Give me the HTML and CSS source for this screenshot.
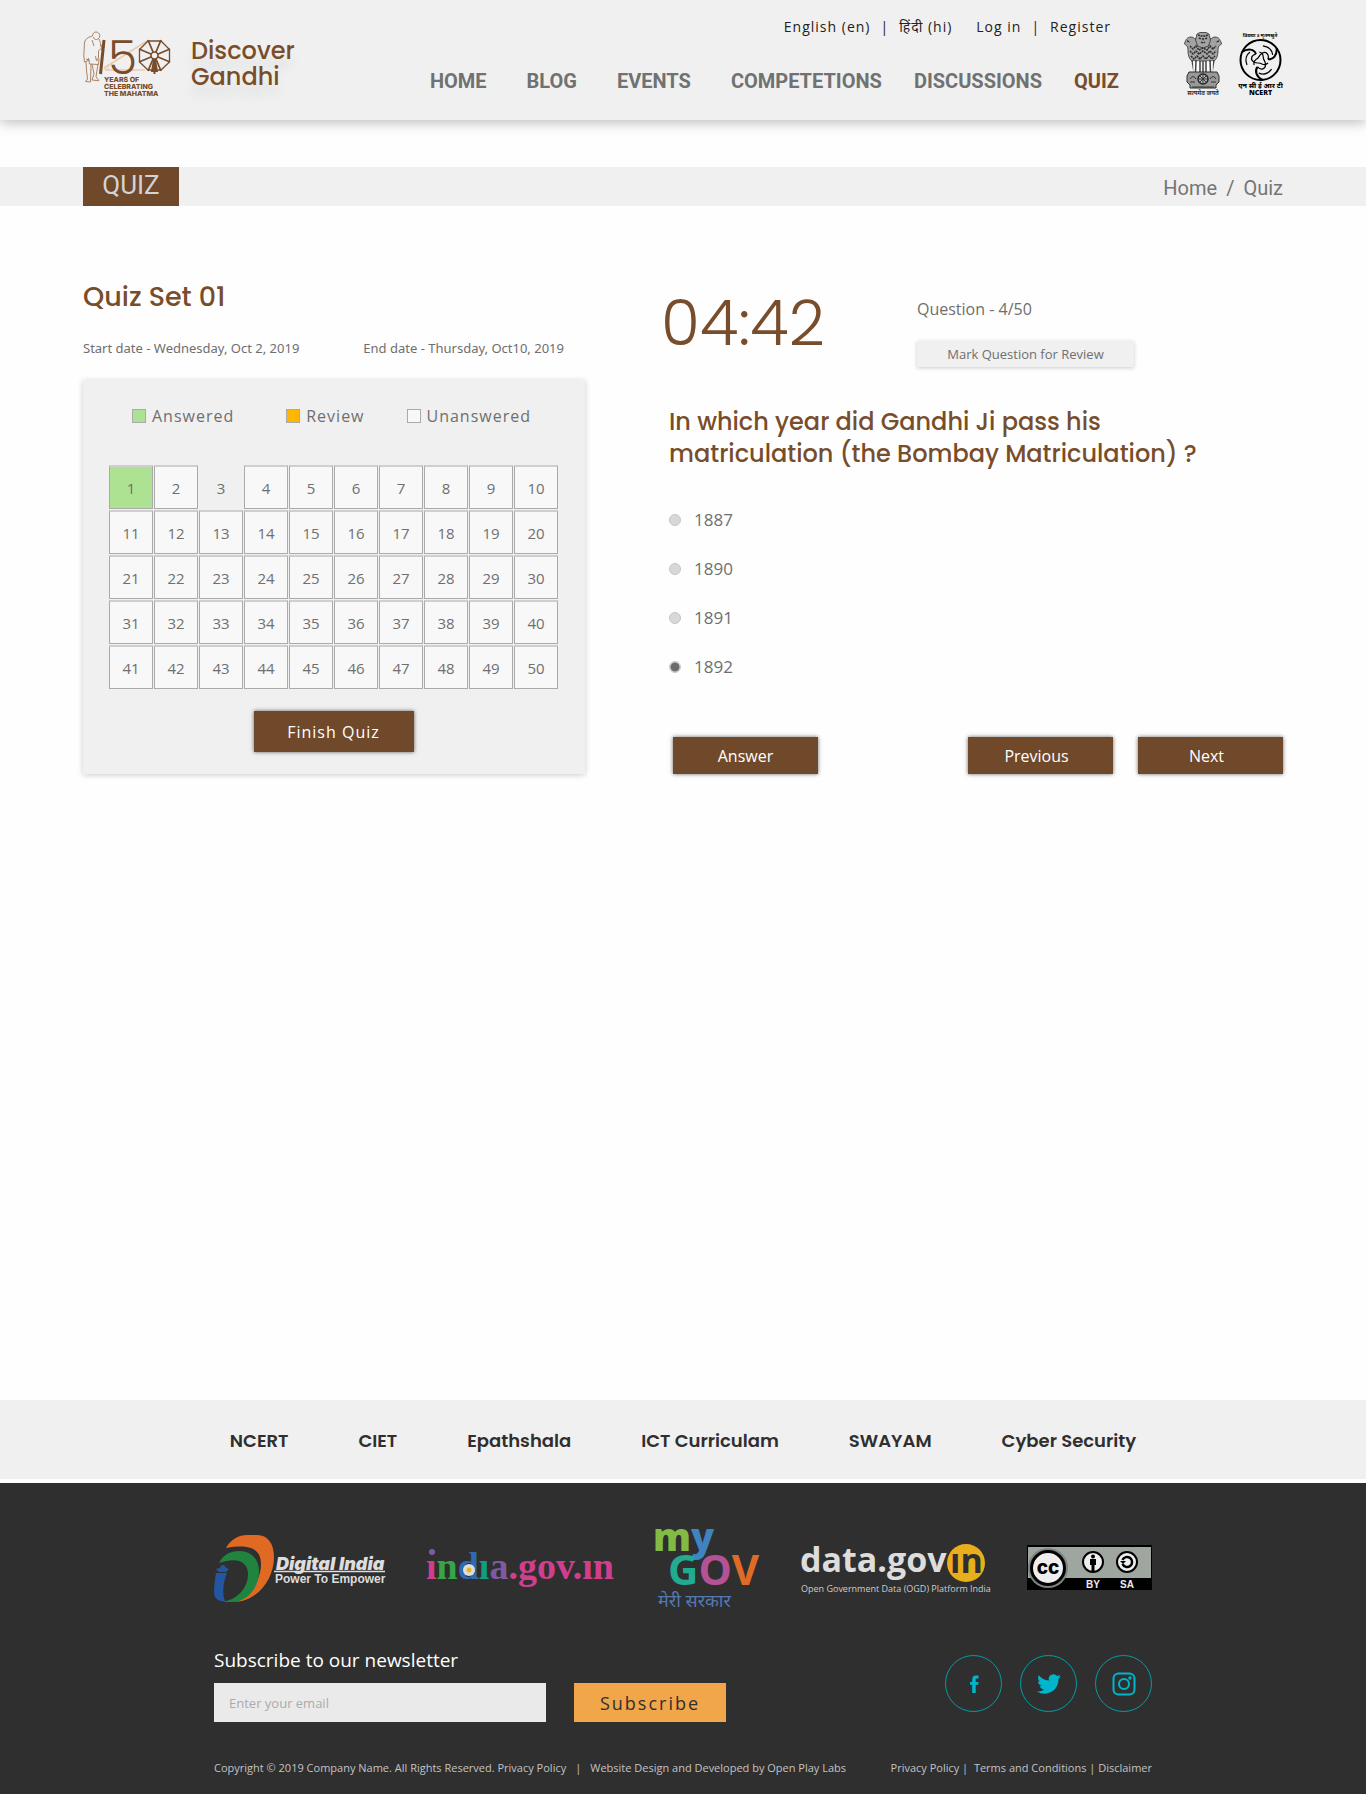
FILE: index.html
```html
<!DOCTYPE html>
<html lang="en">
<head>
<meta charset="utf-8">
<meta name="viewport" content="width=device-width, initial-scale=1">
<title>Discover Gandhi - Quiz</title>
<link rel="stylesheet" href="styles.css">
</head>
<body>
<header class="site-header">
  <div class="container header-row">
    <a class="brand" href="#">
      <svg class="brand-mark" width="90" height="64" viewBox="0 0 90 64" aria-hidden="true">
        <g fill="none" stroke="#a98568" stroke-width="1">
          <path d="M9.500 4c0-2.500 1.500-4 3.500-4s3.800 1.500 3.800 3.700-1.500 3.800-3.300 3.800-3-1-3-2.500M9.500 4C5 5 2.500 7 1.500 10L.8 24l.7 6 3-1 1-3M16 7c2 3 1 6 2.500 9l-3 3v7l-2 3-1-5M5.500 26l1 6 9 .5.500-6M3 30l.5 8 1 9-2 2.500 5 .5.500-18M9 32l2 10-2 6 7 .8-3-4 2-13M9 8l2 6M17 14l4-2v4l-3 2M3 27l4 2"/>
        </g>
        <path d="M64 9L21 36M22 38h40" fill="none" stroke="#efc9a8" stroke-width="1.500"/>
        <circle cx="23.500" cy="36" r="1.800" fill="none" stroke="#efc9a8"/>
        <path d="M21 8l-3.500 34" stroke="#784d2b" stroke-width="3" fill="none"/>
        <text x="25" y="42" font-family="Poppins" font-size="47" font-weight="300" fill="#784d2b">5</text>
        <g stroke="#784d2b" fill="none" stroke-width="1.300">
          <path d="M65 9h13l8.500 8.500v12.500L78 38H65l-8.500-8V17.500z"/>
          <path stroke-width="1.800" d="M65 8l13 31M78 8L65 39M56 17l31 13M56 30l31-13"/>
        </g>
        <circle cx="71.500" cy="23.500" r="3.500" fill="#f0f0f0" stroke="#784d2b" stroke-width="1.600"/>
        <path d="M70 27h3l2 13h-2.500v2h-2v-2H68z" fill="#784d2b"/>
        <g font-family="Inter" font-weight="800" font-size="7" fill="#784d2b" text-rendering="geometricPrecision">
          <text x="21" y="50">YEARS OF</text>
          <text x="21" y="57">CELEBRATING</text>
          <text x="21" y="64">THE MAHATMA</text>
        </g>
      </svg>
      <span class="brand-name">Discover<br>Gandhi</span>
    </a>
    <div class="header-nav">
      <div class="top-links">
        <a href="#">English (en)</a><span>|</span><a href="#" lang="hi">हिंदी (hi)</a>
        <a class="login" href="#">Log in</a><span>|</span><a href="#">Register</a>
      </div>
      <nav class="main-nav">
        <a href="#">HOME</a>
        <a href="#">BLOG</a>
        <a href="#">EVENTS</a>
        <a href="#">COMPETETIONS</a>
        <a class="close" href="#">DISCUSSIONS</a>
        <a class="close current" href="#">QUIZ</a>
      </nav>
    </div>
    <div class="emblems">
      <svg width="38" height="64" viewBox="0 0 38 64" role="img" aria-label="State emblem of India">
        <g fill="#a3a3a3" stroke="#2e2e2e" stroke-width=".8">
          <path d="M7 5c-4 0-5 3-6 5l-.5 2 2 1.500C4 15 4 17 4 19c0 5 2 9 4 10h22c2-1 4-5 4-10 0-2 0-4 1.500-5.500l2-1.500-.5-2c-1-2-2-5-6-5-3 0-3 2-5 2H12C10 7 10 5 7 5z"/>
          <path d="M13 2l3-1.500h6L25 2l1.500 6-2 6-5.500 2-5.500-2-2-6z"/>
        </g>
        <path d="M14 3l3 1h4l3-1M15 6l2 1M23 6l-2 1M17 10q2 1.500 4 0M19 6v3M3 9l3 1M35 9l-3 1M6 14l3 3 3-3 3 4 4-2 4 2 3-4 3 3 3-3M6 19l3 3 3-3 3 3 4-3 4 3 3-3 3 3 3-3M7 24l3 3 3-3 3 3 3-3 3 3 3-3 3 3 3-3" fill="none" stroke="#2b2b2b" stroke-width="1.500" stroke-dasharray="2 .7"/>
        <path d="M8 28l2 12M12 28l-.500 12M16 29v11M19 29v11M22 29v11M26 28l.500 12M30 28l-2 12" stroke="#454545" stroke-width="1.500" fill="none"/>
        <path d="M10 29v11M14 29v11M24 29v11M28 29v11" stroke="#fff" stroke-width="1.500"/>
        <path d="M5 40h28l2 4v6l-3 3v3H6v-3l-3-3v-6z" fill="#999" stroke="#2d2d2d"/>
        <circle cx="19" cy="47" r="5" fill="#bbb" stroke="#222" stroke-width="1.500"/>
        <path d="M19 42v10M14 47h10M15.500 43.500l7 7M22.500 43.500l-7 7M6 47q3-5 6 0M26 47q3-5 6 0M6 50h5M27 50h5M8 55h22" stroke="#333" fill="none"/>
        <text x="19" y="63" text-anchor="middle" font-family="Noto Sans Devanagari, Noto Sans, sans-serif" font-size="6" font-weight="700" fill="#333">सत्यमेव जयते</text>
      </svg>
      <svg width="44" height="64" viewBox="0 0 44 64" role="img" aria-label="NCERT">
        <text x="21" y="5" text-anchor="middle" font-family="Noto Sans Devanagari, Noto Sans, sans-serif" font-size="5" font-weight="700">विद्यया ऽ मृतमश्नुते</text>
        <circle cx="21.500" cy="28" r="20" fill="none" stroke="#000" stroke-width="2"/>
        <g fill="none" stroke="#000" stroke-width="1.200">
          <g id="wing">
            <path d="M3 20c6-4 12-3 14 2" stroke-width="2"/>
            <path d="M17 22c-5 1-6 6-2 8 3 2 5 0 8 2 2 1 4 1 6-1M8 33c-2-5-1-10 3-13"/>
          </g>
          <use href="#wing" transform="rotate(120 21.500 28)"/>
          <use href="#wing" transform="rotate(240 21.500 28)"/>
        </g>
        <text x="21.500" y="56" text-anchor="middle" font-family="Noto Sans Devanagari, Noto Sans, sans-serif" font-size="7" font-weight="800">एन सी ई आर टी</text>
        <text x="21.500" y="63" text-anchor="middle" font-family="Noto Sans, sans-serif" font-size="7" font-weight="900">NCERT</text>
      </svg>
    </div>
  </div>
</header>

<div class="page-bar">
  <div class="container page-bar-row">
    <h1 class="page-tag">QUIZ</h1>
    <nav class="breadcrumb" aria-label="Breadcrumb"><a href="#">Home</a><span>/</span><a href="#">Quiz</a></nav>
  </div>
</div>

<main class="container quiz">
  <section>
    <h2 class="set-title">Quiz Set 01</h2>
    <div class="dates"><span>Start date - Wednesday, Oct 2, 2019</span><span>End date - Thursday, Oct10, 2019</span></div>
    <div class="panel">
      <ul class="legend">
        <li><i class="swatch answered"></i>Answered</li>
        <li><i class="swatch review"></i>Review</li>
        <li><i class="swatch"></i>Unanswered</li>
      </ul>
      <div class="numbers">
        <button class="answered">1</button><button>2</button><button class="active">3</button><button>4</button><button>5</button><button>6</button><button>7</button><button>8</button><button>9</button><button>10</button>
        <button>11</button><button>12</button><button>13</button><button>14</button><button>15</button><button>16</button><button>17</button><button>18</button><button>19</button><button>20</button>
        <button>21</button><button>22</button><button>23</button><button>24</button><button>25</button><button>26</button><button>27</button><button>28</button><button>29</button><button>30</button>
        <button>31</button><button>32</button><button>33</button><button>34</button><button>35</button><button>36</button><button>37</button><button>38</button><button>39</button><button>40</button>
        <button>41</button><button>42</button><button>43</button><button>44</button><button>45</button><button>46</button><button>47</button><button>48</button><button>49</button><button>50</button>
      </div>
      <button class="btn finish">Finish Quiz</button>
    </div>
  </section>

  <section class="play">
    <div class="status">
      <div class="timer">04:42</div>
      <div class="meta">
        <p>Question - 4/50</p>
        <button class="mark">Mark Question for Review</button>
      </div>
    </div>
    <form class="question">
      <fieldset>
        <legend>In which year did Gandhi Ji pass his<br>matriculation (the Bombay Matriculation) ?</legend>
        <div class="options">
          <label><input type="radio" name="year" value="1887">1887</label>
          <label><input type="radio" name="year" value="1890">1890</label>
          <label><input type="radio" name="year" value="1891">1891</label>
          <label><input type="radio" name="year" value="1892" checked>1892</label>
        </div>
      </fieldset>
      <div class="actions">
        <button class="btn first" type="button">Answer</button>
        <button class="btn step" type="button">Previous</button>
        <button class="btn step" type="button">Next</button>
      </div>
    </form>
  </section>
</main>

<nav class="partners">
  <a href="#">NCERT</a>
  <a href="#">CIET</a>
  <a href="#">Epathshala</a>
  <a href="#">ICT Curriculam</a>
  <a href="#">SWAYAM</a>
  <a href="#">Cyber Security</a>
</nav>

<footer class="site-footer">
  <div class="footer-inner">
    <div class="logos">
      <a href="#"><svg width="172" height="66" viewBox="0 0 172 66" role="img" aria-label="Digital India - Power To Empower">
        <path d="M12 13C17 4 25 0 33 0h10c11 0 17 9 17 22 0 20-13 39-32 44l-8 1c16-5 27-22 27-38C47 16 39 8 12 13z" fill="#e06a24"/>
        <path d="M5 28c4-8 11-12 20-12 12 0 20 8 20 20 0 17-12 31-27 31H8c14-2 26-13 26-28 0-11-9-18-29-11z" fill="#20843f"/>
        <path d="M2 38h11c-4 10-5 20-2 28-7 1-11-3-11-9 0-7 1-13 2-19zM2 34l4-1c1-4 5-4 6 0l3 1-3 3H5z" fill="#2455a0"/>
        <text x="62" y="35" font-family="Inter" font-size="18" font-style="italic" font-weight="900" fill="#ddd">Digital India</text>
        <path d="M60 36.500h111" stroke="#ddd" stroke-width="1.500"/>
        <text x="61" y="48" font-family="Liberation Sans" font-size="12" font-weight="700" fill="#ddd">Power To Empower</text>
      </svg></a>
      <a href="#"><svg width="190" height="68" viewBox="0 0 190 68" role="img" aria-label="india.gov.in">
        <circle cx="6" cy="18" r="3" fill="#7d5aa2"/>
        <text x="0" y="45" font-family="Liberation Serif" font-size="38" font-weight="700"><tspan fill="#cf3f8e">ı</tspan><tspan fill="#36a548">n</tspan><tspan fill="#2f69b3">d</tspan><tspan fill="#149b84">ı</tspan><tspan fill="#7d5aa2">a</tspan><tspan fill="#cf3f8e">.gov.ın</tspan></text>
        <circle cx="43" cy="36" r="6" fill="#ddd"/><circle cx="43" cy="36" r="2.500" fill="#e9b51c"/>
      </svg></a>
      <a href="#"><svg width="105" height="82" viewBox="0 0 105 82" role="img" aria-label="myGov">
        <g font-family="Open Sans" font-weight="800">
          <text x="-3" y="24" font-size="38"><tspan fill="#82ba46">m</tspan><tspan fill="#3f83c1">y</tspan></text>
          <text x="12" y="58" font-size="42" font-weight="700"><tspan fill="#21ac91">G</tspan><tspan fill="#b35295">O</tspan><tspan fill="#df6b27">V</tspan></text>
        </g>
        <text x="2" y="80" font-family="Noto Sans Devanagari, Noto Sans, sans-serif" font-size="18" fill="#5379b3">मेरी सरकार</text>
      </svg></a>
      <a href="#"><svg width="186" height="50" viewBox="0 0 186 50" role="img" aria-label="data.gov.in">
        <text x="-1" y="29" font-family="Open Sans" font-size="34" font-weight="700" fill="#ddd">data.gov</text>
        <circle cx="165" cy="20" r="19" fill="#e9ae1b"/>
        <text x="149" y="30" font-family="Open Sans" font-size="34" font-weight="700" fill="#2f2f2f">ın</text>
        <text x="0" y="49" font-family="Open Sans" font-size="9" fill="#ccc">Open Government Data (OGD) Platform India</text>
      </svg></a>
      <a href="#"><svg width="125" height="47" viewBox="0 0 125 47" role="img" aria-label="Creative Commons BY SA">
        <path d="M0 0h125v45H0z" fill="#000"/>
        <path d="M1 2h123v31H1z" fill="#9fa69f"/>
        <circle cx="21" cy="23" r="20" fill="#7d837d"/>
        <circle cx="21" cy="23" r="16.500" fill="#eee" stroke="#000" stroke-width="3"/>
        <text x="21" y="29" text-anchor="middle" font-family="Inter" font-size="19" font-weight="800">cc</text>
        <circle cx="66" cy="17" r="10" fill="#eee" stroke="#000" stroke-width="2"/>
        <circle cx="66" cy="11.500" r="2"/><path d="M63 14h6v6h-1.500v6h-3v-6H63z"/>
        <circle cx="100" cy="17" r="10" fill="#eee" stroke="#000" stroke-width="2"/>
        <path d="M95.500 15a5 5 0 1 1 0 4" fill="none" stroke="#000" stroke-width="2.500"/><path d="M93 16h6l-3 3z"/>
        <g fill="#eee" font-family="Liberation Sans" font-size="10" font-weight="700"><text x="59" y="43">BY</text><text x="93" y="43">SA</text></g>
      </svg></a>
    </div>

    <div class="connect">
      <form class="newsletter">
        <label for="email">Subscribe to our newsletter</label>
        <div class="newsletter-row">
          <input id="email" type="email" placeholder="Enter your email">
          <button type="button">Subscribe</button>
        </div>
      </form>
      <div class="social">
        <a href="#" aria-label="Facebook"><svg width="18" height="18" viewBox="0 0 18 18"><path d="M7.200 18V9.800H5V7h2.200V4.700C7.200 2 8.500.5 11 .5h2.500v3H12c-1 0-1.300.4-1.300 1.300V7h2.800l-.3 2.800h-2.500V18z"/></svg></a>
        <a href="#" aria-label="Twitter"><svg width="24" height="24" viewBox="0 0 24 24"><path d="M24 4.600c-.9.400-1.800.7-2.800.8 1-.6 1.800-1.600 2.200-2.700-1 .6-2 1-3.100 1.200A4.900 4.900 0 0 0 11.900 8.400C7.800 8.200 4.200 6.200 1.700 3.200.4 5.400 1 8.300 3.200 9.700c-.8 0-1.600-.2-2.200-.6-.1 2.300 1.600 4.400 3.900 4.900-.7.200-1.500.2-2.200.1.600 2 2.400 3.400 4.600 3.400A9.900 9.900 0 0 1 0 19.500 13.900 13.900 0 0 0 7.500 21.700c9.100 0 14.300-7.700 14-14.600 1-.7 1.800-1.600 2.500-2.500z"/></svg></a>
        <a href="#" aria-label="Instagram"><svg class="outline" width="24" height="24" viewBox="0 0 24 24"><rect x="1.500" y="1.500" width="21" height="21" rx="5"/><circle cx="12" cy="12" r="5"/><circle cx="18" cy="6" r=".7"/></svg></a>
      </div>
    </div>

    <div class="legal">
      <p>Copyright © 2019 Company Name. All Rights Reserved. <a href="#">Privacy Policy</a><span class="bar">|</span>Website Design and Developed by Open Play Labs</p>
      <p><a href="#">Privacy Policy</a> |&nbsp; <a href="#">Terms and Conditions</a> | <a href="#">Disclaimer</a></p>
    </div>
  </div>
</footer>
</body>
</html>
```
FILE: styles.css
```css
* { box-sizing: border-box; }

body {
  margin: 0;
  min-height: 100vh;
  display: flex;
  flex-direction: column;
  background: #fefefe;
  color: #6f6f6f;
  font-family: "Open Sans", "Noto Sans", "Noto Sans Devanagari", sans-serif;
}

a { color: inherit; text-decoration: none; }
h1, h2, p, ul, fieldset, legend { margin: 0; padding: 0; border: 0; }
button { font: inherit; color: inherit; border: 0; padding: 0; cursor: pointer; }
svg { display: block; overflow: visible; }

.container { width: 100%; max-width: 1200px; margin: 0 auto; }

/* Header */
.site-header {
  background: #f0f0f0;
  box-shadow: 0 3px 12px rgba(0, 0, 0, .25);
}
.header-row { display: flex; height: 120px; }
.brand { display: flex; gap: 18px; padding-top: 32px; }
.brand-name {
  padding-top: 6px;
  font: 500 24px/26px "Poppins", sans-serif;
  color: #784d2b;
  text-shadow: 0 12px 12px rgba(0, 0, 0, .08);
}
.header-nav { margin-left: auto; padding-top: 16px; }
.top-links {
  display: flex;
  justify-content: flex-end;
  padding-right: 8px;
  gap: 10px;
  font-size: 14px;
  line-height: 22px;
  letter-spacing: 1px;
  color: #222;
}
.top-links .login { margin-left: 14px; }
.main-nav {
  display: flex;
  gap: 32px;
  margin-top: 31px;
  font: 700 20px/24px Roboto, sans-serif;
  color: #6f7271;
}
.main-nav a + a:not(.close) { margin-left: 8px; }
.main-nav .current { color: #784d2b; }
.emblems { display: flex; gap: 17px; margin-left: 65px; padding-top: 32px; }

/* Page title bar */
.page-bar { margin-top: 47px; background: #f0f0f0; }
.page-bar-row { display: flex; justify-content: space-between; height: 39px; }
.page-tag {
  width: 96px;
  background: #70492b;
  color: #d3d3d3;
  font: 400 26px/36px Roboto, sans-serif;
  text-align: center;
}
.breadcrumb { display: flex; gap: 9px; font: 400 20px/42px Roboto, sans-serif; color: #757575; }

/* Quiz */
.quiz {
  flex: 1;
  display: grid;
  grid-template-columns: minmax(0, 502px) minmax(0, 1fr);
  align-items: start;
  gap: 76px;
  padding-top: 73px;
  padding-bottom: 40px;
}
.set-title { font: 500 27px/36px "Poppins", sans-serif; color: #784d2b; }
.dates {
  display: flex;
  gap: 64px;
  margin-top: 23px;
  font-family: "Noto Sans", sans-serif;
  font-size: 13px;
  line-height: 20px;
}
.panel {
  margin-top: 22px;
  padding: 24px 27px 22px 26px;
  background: #f0f0f0;
  box-shadow: 0 1px 6px rgba(0, 0, 0, .2);
}
.legend {
  display: flex;
  justify-content: space-between;
  padding: 0 27px 0 23px;
  list-style: none;
  font-size: 16px;
  line-height: 24px;
  letter-spacing: 1px;
}
.legend li { display: flex; align-items: center; gap: 6px; }
.legend li:first-child { margin-right: 10px; }
.swatch { width: 14px; height: 14px; border: 1px solid #aaa; background: #f8f8f8; }
.answered { background: #aee293; }
.swatch.review { background: #ffb600; }

.numbers { display: grid; grid-template-columns: repeat(10, 1fr); gap: 1px; margin-top: 37px; }
.numbers button {
  height: 44px;
  border: 1px solid #aaa;
  border-top: 2px solid #cfcfcf;
  background: #f8f8f8;
  font-size: 15px;
}
.numbers .answered { background: #aee293; }
.numbers .active { border-color: transparent; background: none; }

.btn {
  width: 145px;
  height: 37px;
  background: #70492b;
  color: #fff;
  font-size: 16px;
  box-shadow: 0 0 4px rgba(0, 0, 0, .6);
}
.step { padding-right: 8px; }
.finish {
  display: block;
  width: 160px;
  height: 41px;
  margin: 22px auto 0;
  letter-spacing: 1px;
}

.status { display: grid; grid-template-columns: 256px 1fr; margin-top: 7px; }
.timer { font: 300 63px/74px "Poppins", sans-serif; color: #784d2b; }
.meta { padding-top: 11px; font-size: 16px; line-height: 24px; }
.mark {
  width: 217px;
  height: 26px;
  margin-top: 20px;
  display: block;
  background: #f0f0f0;
  font-size: 13px;
  box-shadow: 0 1px 4px rgba(0, 0, 0, .2);
}
.question { margin-top: 39px; padding-left: 8px; }
.question legend { font: 500 24px/32px "Poppins", sans-serif; color: #784d2b; }
.options { display: grid; gap: 24px; justify-items: start; padding-top: 37px; font-size: 17px; line-height: 25px; }
.options label { display: flex; align-items: center; gap: 13px; }
.options input {
  appearance: none;
  width: 12px;
  height: 12px;
  margin: 0;
  border: 1px solid #c6c6c6;
  border-radius: 50%;
  background: #d8d8d8;
}
.options input:checked { background: radial-gradient(circle, #6b6b6b 0 4px, #d8d8d8 5px); }
.actions { display: flex; gap: 25px; margin-top: 58px; padding-left: 4px; }
.actions .first { margin-right: auto; }

/* Partner links */
.partners {
  display: flex;
  flex-wrap: wrap;
  justify-content: center;
  gap: 0 70px;
  padding-top: 2px;
  background: #f0f0f0;
  color: #2f2f2f;
  font: 600 18px/77px "Poppins", sans-serif;
}

/* Footer */
.site-footer { margin-top: 4px; background: #2f2f2f; color: #c3c3c3; }
.footer-inner { max-width: 938px; margin: 0 auto; padding: 44px 0 16px; }
.logos { display: flex; justify-content: space-between; align-items: center; }
.connect { display: flex; justify-content: space-between; align-items: center; margin-top: 36px; }
.newsletter label { display: block; font-size: 19px; line-height: 30px; color: #fff; }
.newsletter-row { display: flex; gap: 28px; margin-top: 8px; }
.newsletter input {
  width: 332px;
  height: 39px;
  padding: 0 15px;
  border: 0;
  background: #eaeaea;
  font: 13px "Open Sans", sans-serif;
}
.newsletter input::placeholder { color: #aaa; opacity: 1; }
.newsletter button {
  width: 152px;
  height: 39px;
  background: #f2a64a;
  color: #2f2f2f;
  font-size: 18px;
  font-weight: 500;
  letter-spacing: 2px;
}
.social { display: flex; gap: 18px; }
.social a {
  display: grid;
  place-items: center;
  width: 57px;
  height: 57px;
  border: 1px solid #009da8;
  border-radius: 50%;
}
.social svg { fill: #00b5cc; }
.social .outline { fill: none; stroke: #00b5cc; stroke-width: 2; }
.legal { display: flex; justify-content: space-between; margin-top: 36px; font-size: 11px; line-height: 20px; }
.legal .bar { margin: 0 9px; }
```
